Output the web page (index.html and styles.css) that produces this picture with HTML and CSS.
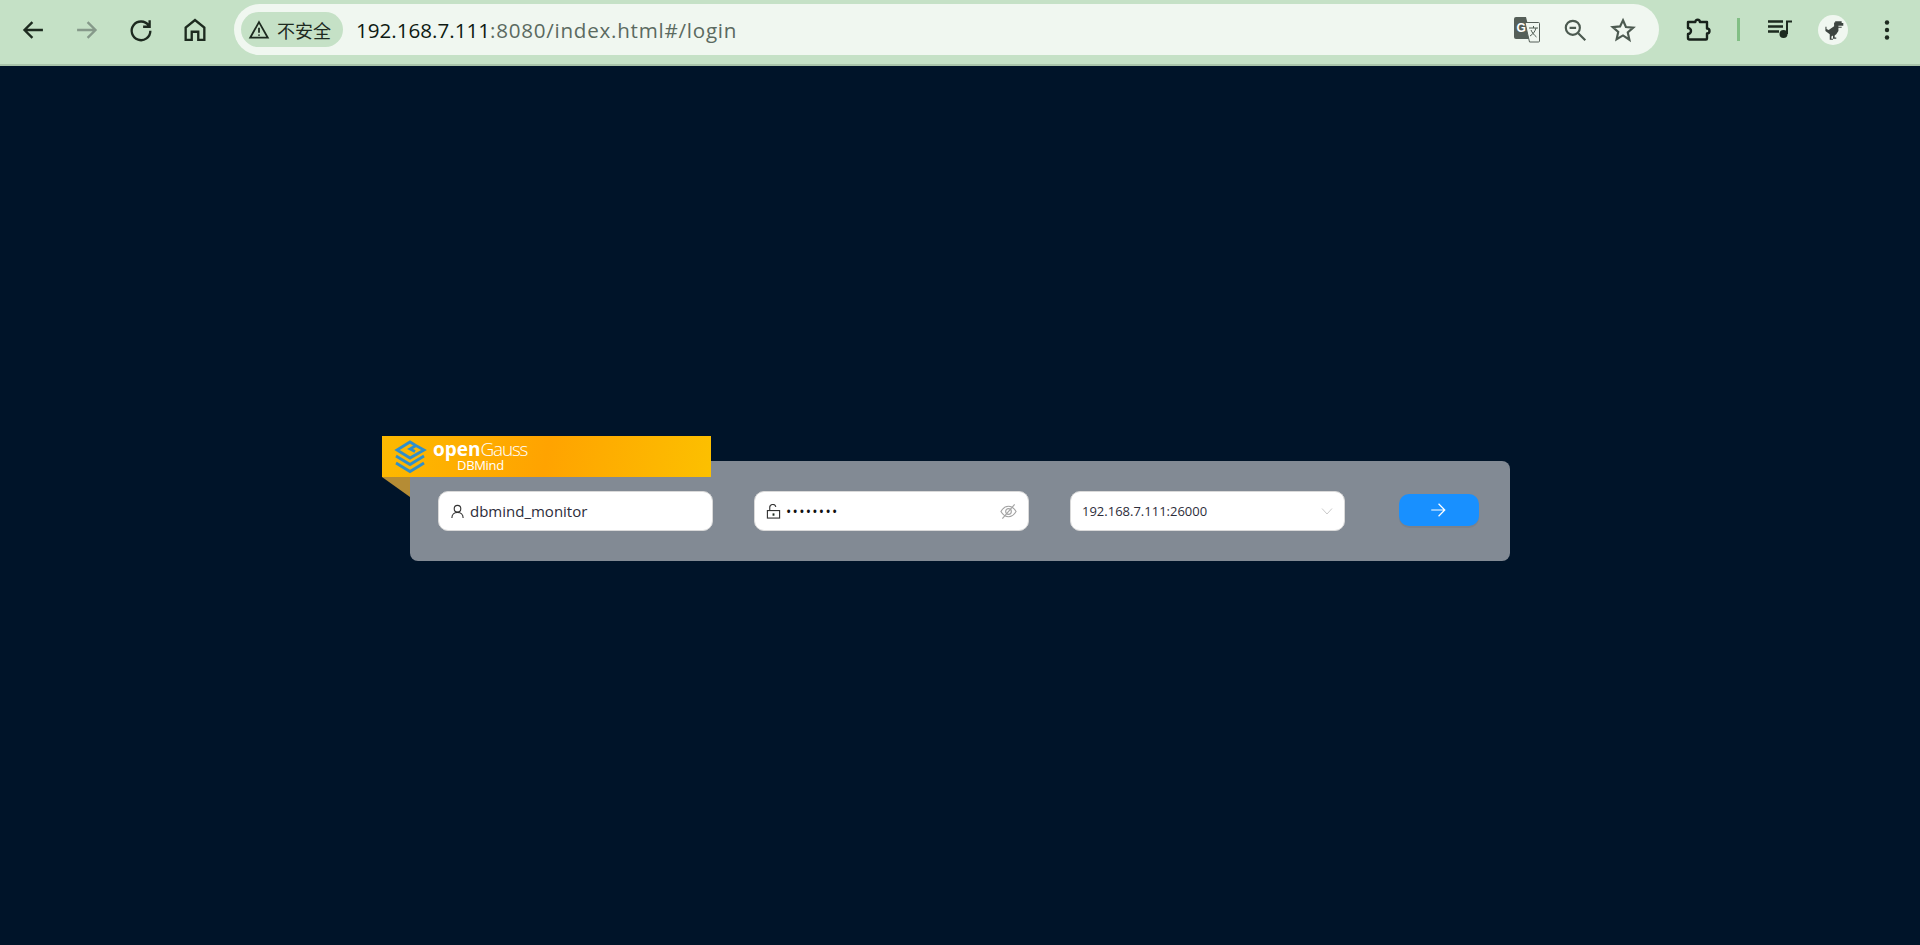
FILE: index.html
```html
<!DOCTYPE html>
<html lang="zh-CN">
<head>
<meta charset="utf-8">
<title>DBMind</title>
<link rel="stylesheet" href="styles.css">
</head>
<body>
<header class="toolbar">
  <nav class="nav-icons">
    <svg class="tb-icon" viewBox="0 0 24 24"><path class="st dark" d="M20.500 12H5M11.500 5.200 4.700 12l6.800 6.800"/></svg>
    <svg class="tb-icon" viewBox="0 0 24 24"><path class="st dim" d="M3.500 12H19M12.500 5.200l6.800 6.800-6.800 6.800"/></svg>
    <svg class="tb-icon" viewBox="0 0 24 24"><path class="st dark" d="M18.600 8.200A8 8 0 1 0 20 12.600M19.400 3.600v5.600h-5.600"/></svg>
    <svg class="tb-icon" viewBox="0 0 24 24"><path class="st dark" d="M4 20.500V10l8-6.500 8 6.500V20.500h-5.200V13.500H9.200v7z"/></svg>
  </nav>
  <div class="omnibox">
    <div class="security">
      <svg class="warn" viewBox="0 0 20 20"><path class="st thin dark" d="M10 2.800 18 17H2z"/><path class="st thin dark" d="M10 8v4.500M10 14v1.200"/></svg>
      <span>不安全</span>
    </div>
    <div class="url"><span class="host">192.168.7.111</span><span class="path">:8080/index.html#/login</span></div>
    <div class="omni-actions">
      <svg class="omni-ic" viewBox="0 0 26 26"><path class="fill-g" d="M2 0h10l5.500 22H2a2 2 0 0 1-2-2V2a2 2 0 0 1 2-2z"/><path class="paper" d="M11 5.500h13.500a1 1 0 0 1 1 1V24a1 1 0 0 1-1 1H15.500z"/><text class="g-letter" x="2.500" y="15">G</text><path class="st xs mid" d="M15 11h9M19.500 9v2M22 11c-1 4-3.500 6.500-6 8M17 13c1 2.500 3 5 5.500 7"/></svg>
      <svg class="omni-ic" viewBox="0 0 24 24"><circle class="st mid" cx="10" cy="10" r="6.500"/><path class="st mid" d="M15 15l6.500 6.500M7 10h6"/></svg>
      <svg class="omni-ic" viewBox="0 0 24 24"><path class="st mid" d="m12 3 2.700 6.200 6.800.6-5.100 4.500 1.500 6.700L12 17l-5.900 3.500 1.500-6.700-5.100-4.500 6.800-.6z"/></svg>
    </div>
  </div>
  <div class="right-icons">
    <svg class="ext" viewBox="0 0 28 28"><path class="st heavy" d="M3 6h7.300a2.300 2.300 0 0 1 4.600 0H22v6.500a2.500 2.500 0 0 1 0 5v5a1 1 0 0 1-1 1H4.500a1.500 1.500 0 0 1-1.500-1.500v-4a3 3 0 0 0 0-6z"/></svg>
    <span class="divider"></span>
    <svg class="media" viewBox="0 0 24 24"><path class="st bar" d="M0 3.500h15M0 8.500h15M0 13.500h11"/><path class="st dark" d="M19 16V3.500h5"/><circle class="solid" cx="15.500" cy="16" r="4"/></svg>
    <div class="avatar">
      <svg viewBox="0 0 24 24"><path class="solid-mid" d="M14 4h6v1.500h1.500V8H17v1h3v1h-3v3l-2 3-1.500 1v2h1.500v1h-3v-3l-1.500 1v2h1.500v1h-3v-5L5 13V9h1v2l2 1 2-1.500 3-2V5h1z"/></svg>
    </div>
    <svg class="kebab" viewBox="0 0 6 24"><circle class="solid" cx="3" cy="4.500" r="2.200"/><circle class="solid" cx="3" cy="12" r="2.200"/><circle class="solid" cx="3" cy="19.500" r="2.200"/></svg>
  </div>
</header>

<main class="page">
  <section class="login">
    <div class="brand">
      <svg class="brand-logo" viewBox="0 0 40 40">
        <path class="lg" d="M25 9 20 6 7 14l13 8 14-8-8-4.500-6 3.500 5 2.500"/>
        <path class="lg" d="M6 20l14 8.500L34 20M6 27l14 8.500L34 27"/>
      </svg>
      <div class="brand-text">
        <div class="brand-name"><b>open</b><span class="gauss">Gauss</span></div>
        <div class="brand-sub">DBMind</div>
      </div>
    </div>
    <span class="fold"></span>
    <div class="field">
      <svg class="prefix" viewBox="0 0 16 16"><circle class="st ic" cx="8" cy="5" r="3.500"/><path class="st ic" d="M2 15c0-3.500 2.500-6 6-6s6 2.500 6 6"/></svg>
      <span class="value">dbmind_monitor</span>
    </div>
    <div class="field">
      <svg class="prefix" viewBox="0 0 16 16"><rect class="st ic" x="1.500" y="7" width="13" height="8"/><path class="st ic" d="M4 7V4a3.300 3.300 0 0 1 6.500-1"/><rect class="solid" x="7" y="10" width="2" height="2.500"/></svg>
      <span class="dots">••••••••</span>
      <svg class="suffix" viewBox="0 0 18 18"><path class="st ic2" d="M1 9c2-3.500 4.500-5.500 8-5.500S15 5.500 17 9c-2 3.500-4.500 5.500-8 5.500S3 12.500 1 9z"/><circle class="st ic2" cx="9" cy="9" r="3"/><path class="st ic2" d="M15.500 1.500l-13 15"/></svg>
    </div>
    <div class="field select">
      <span class="sel-value">192.168.7.111:26000</span>
      <svg class="chevron" viewBox="0 0 12 12"><path class="st chev" d="m1 3.500 5 5.500 5-5.500"/></svg>
    </div>
    <button class="go" type="button" aria-label="登录">
      <svg viewBox="0 0 16 16"><path class="st white" d="M2 8h12M8.500 2.500 14 8l-5.500 5.500"/></svg>
    </button>
  </section>
</main>
</body>
</html>
```
FILE: styles.css
```css
* { box-sizing: border-box; }
html, body { margin: 0; height: 100%; }
body {
  background: #001429;
  font-family: "Open Sans", "Noto Sans", "Noto Sans CJK SC", sans-serif;
  overflow: hidden;
}

.st { fill: none; stroke-width: 2; }
.dark { stroke: #1d2a1f; }
.dim { stroke: #86998a; }
.mid { stroke: #4c5a50; }
.bar { stroke: #1d2a1f; stroke-width: 2.500; }
.thin { stroke-width: 1.600; }
.xs { stroke-width: 1; }
.heavy { stroke: #17211a; stroke-width: 2.400; stroke-linejoin: round; }
.solid { fill: #1d2a1f; }
.solid-mid { fill: #3d4540; }
.fill-g { fill: #555f58; }
.paper { fill: #f0f7f0; stroke: #555f58; stroke-width: 1; }
.g-letter { fill: #fff; font: 700 12px "Liberation Sans", sans-serif; }

.toolbar {
  height: 66px;
  display: flex;
  align-items: center;
  background: #c5e1c6;
  border-bottom: 2px solid #a9c4aa;
  padding: 0 0 5px 19px;
}
.nav-icons { display: flex; gap: 26px; width: 215px; }
.tb-icon { width: 28px; height: 28px; flex: none; }

.omnibox {
  width: 1425px;
  height: 51px;
  border-radius: 26px;
  background: #f0f7f0;
  display: flex;
  align-items: center;
  padding-left: 7px;
}
.security {
  width: 102px;
  height: 35px;
  flex: none;
  border-radius: 18px;
  background: #c5e1c6;
  display: flex;
  align-items: center;
  gap: 7px;
  padding-left: 7px;
  font-size: 18px;
  color: #1d2a1f;
}
.warn { width: 22px; height: 22px; flex: none; }
.url {
  margin-left: 13px;
  font-family: "Open Sans", sans-serif;
  font-size: 20.600px;
  flex: 1;
}
.host { color: #0e1a12; }
.path { color: #5b6a60; letter-spacing: .75px; }
.omni-actions { display: flex; align-items: center; gap: 22px; padding-right: 23px; }
.omni-ic { width: 26px; height: 26px; }

.right-icons { display: flex; align-items: center; margin-left: 26px; }
.ext { width: 28px; height: 28px; flex: none; }
.divider { width: 3px; height: 23px; background: #82bf85; margin: 0 28px 0 24px; flex: none; }
.media { width: 24px; height: 24px; flex: none; }
.avatar {
  width: 30px; height: 30px;
  flex: none;
  border-radius: 50%;
  background: #f0f7f0;
  margin: 0 36px 0 26px;
  display: flex; align-items: center; justify-content: center;
}
.avatar svg { width: 26px; height: 26px; }
.kebab { width: 6px; height: 24px; flex: none; }

.page { padding: 395px 0 0 410px; }
.login {
  position: relative;
  width: 1100px;
  height: 100px;
  border-radius: 8px;
  background: #828a94;
  display: flex;
  align-items: flex-start;
  padding: 30px 0 0 28px;
}
.brand {
  position: absolute;
  left: -28px; top: -25px;
  width: 329px; height: 41px;
  background: linear-gradient(100deg, #fdb900 0%, #ffa300 50%, #fcc000 100%);
  display: flex;
  padding-left: 8px;
  color: #fff;
}
.brand-logo { width: 40px; height: 40px; flex: none; }
.lg { fill: none; stroke: #2f8fcc; stroke-width: 2.800; }
.brand-text { margin-left: 3px; padding-top: 4px; line-height: 1; }
.brand-name { font-size: 19px; font-weight: 300; }
.brand-name b { font-weight: 700; }
.gauss { letter-spacing: -1.200px; }
.brand-sub { font-size: 13px; font-weight: 500; letter-spacing: -.3px; margin-left: 24px; }
.fold {
  position: absolute;
  left: -28px; top: 16px;
  border-top: 20px solid #b58c35;
  border-left: 28px solid transparent;
}

.field {
  width: 275px;
  height: 40px;
  flex: none;
  margin-right: 41px;
  border-radius: 10px;
  background: #fff;
  border: 1px solid #d9d9d9;
  display: flex;
  align-items: center;
  padding: 0 11px;
  color: #2d2d3a;
}
.prefix { width: 15px; height: 15px; flex: none; margin-right: 5px; }
.ic { stroke: #333; stroke-width: 1.200; }
.ic2 { stroke: #a3a3a3; stroke-width: 1.200; }
.value { font-size: 15px; }
.dots { font-size: 14px; letter-spacing: 1.300px; color: #111; flex: 1; }
.suffix { width: 17px; height: 17px; }
.select { justify-content: space-between; margin-right: 54px; }
.sel-value { font-size: 13px; }
.chevron { width: 12px; height: 12px; }
.chev { stroke: #c9c9c9; stroke-width: 1; }
.go {
  width: 80px; height: 32px;
  margin-top: 3px;
  flex: none;
  border: 0;
  border-radius: 10px;
  background: #1890ff;
  box-shadow: 0 2px 0 rgba(0,0,0,.05);
  display: flex; align-items: center; justify-content: center;
  padding: 0 3px 0 0;
}
.go svg { width: 18px; height: 18px; }
.white { stroke: #fff; stroke-width: 1.100; }
```
